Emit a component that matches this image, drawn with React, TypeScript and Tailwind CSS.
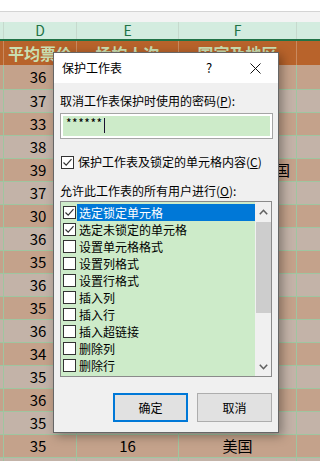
import React from "react";

const dVals = ["36","37","33","38","39","37","30","36","35","36","35","36","34","35","36","35","35",""];
const eVals = ["","","","","","","","","","","","","","","","","16",""];
const fVals = ["","","","","中华人民共和国","","","","","","","","","","","","美国",""];

const items = [
  { label: "选定锁定单元格", checked: true, selected: true },
  { label: "选定未锁定的单元格", checked: true },
  { label: "设置单元格格式" },
  { label: "设置列格式" },
  { label: "设置行格式" },
  { label: "插入列" },
  { label: "插入行" },
  { label: "插入超链接" },
  { label: "删除列" },
  { label: "删除行" },
];

function Check({ checked }: { checked?: boolean }) {
  return (
    <div className="w-[13px] h-[13px] shrink-0 border border-[#333333] bg-white flex items-center justify-center">
      {checked && (
        <svg width="11" height="11" viewBox="0 0 11 11">
          <path d="M1.5 5.5 L4.2 8.2 L9.5 2.2" fill="none" stroke="#333333" strokeWidth="1.2" />
        </svg>
      )}
    </div>
  );
}

export default function App() {
  const font = { fontFamily: '"Noto Sans CJK SC", "Noto Sans", sans-serif' };
  return (
    <div className="relative w-[320px] h-[461px] overflow-hidden bg-white" style={font}>
      {/* top area */}
      <div className="h-[11px] bg-white" />
      <div className="h-px bg-[#d4d4d4]" />
      <div className="h-[10px] bg-[#f3f3f3]" />
      {/* column letters */}
      <div className="flex h-[17px] bg-[#d3ecdf] text-[#217346] text-[14px] leading-[17px]">
        <div className="w-[4px] border-r border-[#c6d9cd]" />
        <div className="w-[73px] border-r border-[#c6d9cd] text-center">D</div>
        <div className="w-[102px] border-r border-[#c6d9cd] text-center">E</div>
        <div className="w-[118px] border-r border-[#c6d9cd] text-center">F</div>
        <div className="flex-1" />
      </div>
      <div className="h-[2px] bg-[#217346]" />
      {/* header row */}
      <div className="flex h-[24px] bg-[#b8632b] text-[#c9dfb1] text-[16px] font-bold leading-[24px]">
        <div className="w-[4px] border-r border-[#c98a5f]" />
        <div className="w-[73px] border-r border-[#c98a5f] text-center whitespace-nowrap overflow-hidden">平均票价</div>
        <div className="w-[102px] border-r border-[#c98a5f] text-center whitespace-nowrap">场均人次</div>
        <div className="w-[118px] border-r border-[#c98a5f] text-center whitespace-nowrap">国家及地区</div>
        <div className="flex-1" />
      </div>
      {/* data rows */}
      {dVals.map((d, i) => (
        <div
          key={i}
          className={`flex ${i === 0 ? "h-[25px]" : "h-[23px]"} border-b border-[#9fc5a0] ${i % 2 === 0 ? "bg-[#c4a28b]" : "bg-[#c3b3a8]"} text-[15px] text-black leading-[22px]`}
        >
          <div className="w-[4px] border-r border-[#9fc5a0]" />
          <div className="w-[73px] border-r border-[#9fc5a0] text-center pr-[4px] flex items-center justify-center">{d}</div>
          <div className="w-[102px] border-r border-[#9fc5a0] flex items-center justify-center">{eVals[i]}</div>
          <div className="w-[118px] border-r border-[#9fc5a0] flex items-center justify-center whitespace-nowrap">{fVals[i]}</div>
          <div className="flex-1" />
        </div>
      ))}

      {/* dialog */}
      <div className="absolute left-[53px] top-[52px] w-[226px] h-[381px] border border-[#666666] bg-[#f0f0f0] shadow-[3px_3px_10px_rgba(0,0,0,0.35)] flex flex-col text-[12px] leading-[16px] text-black">
        <div className="h-[30px] bg-white flex items-center pl-[8px] shrink-0">
          <span>保护工作表</span>
          <span className="absolute left-[152px] top-[7px] text-[13px]">?</span>
          <svg className="absolute left-[196px] top-[10px]" width="11" height="11" viewBox="0 0 11 11">
            <path d="M0.5 0.5 L10.5 10.5 M10.5 0.5 L0.5 10.5" stroke="#111" strokeWidth="1" fill="none" />
          </svg>
        </div>
        <div className="flex flex-col pl-[6px]">
          <div className="mt-[10px]">
            取消工作表保护时使用的密码(<span className="underline">P</span>):
          </div>
          <div className="mt-[4px] w-[213px] h-[26px] border border-[#a5a5a5] bg-white p-[2px]">
            <div className="h-full bg-[#cdebc9] flex items-start pl-[3px]">
              <span className="text-[12px] leading-[14px] tracking-[0.5px]">******</span>
              <span className="w-px h-[15px] bg-[#1a1030] mt-[2px] ml-[1px]" />
            </div>
          </div>
          <div className="mt-[15px] flex items-center pl-[1px] gap-[4px] h-[16px]">
            <Check checked />
            <span>
              保护工作表及锁定的单元格内容(<span className="underline">C</span>)
            </span>
          </div>
          <div className="mt-[13px]">
            允许此工作表的所有用户进行(<span className="underline">O</span>):
          </div>
          <div className="mt-[2px] w-[212px] h-[176px] border border-[#8a8a8a] bg-[#cdebc9] flex overflow-hidden">
            <div className="flex-1 flex flex-col pt-[2px] overflow-hidden">
              {items.map((it, i) => (
                <div key={i} className="h-[17px] flex items-center shrink-0 pl-[2px]">
                  <Check checked={it.checked} />
                  <div
                    className={`ml-[1px] flex-1 h-[17px] pl-[2px] flex items-center whitespace-nowrap ${it.selected ? "bg-[#0078d7] text-white" : ""}`}
                  >
                    {it.label}
                  </div>
                </div>
              ))}
            </div>
            <div className="w-[16px] bg-[#f0f0f0] flex flex-col items-center shrink-0">
              <div className="h-[20px] flex items-center justify-center">
                <svg width="9" height="6" viewBox="0 0 9 6">
                  <path d="M0.8 5.2 L4.5 1.3 L8.2 5.2" fill="none" stroke="#606060" strokeWidth="1.6" />
                </svg>
              </div>
              <div className="w-[15px] h-[91px] bg-[#cdcdcd]" />
              <div className="flex-1" />
              <div className="h-[18px] flex items-center justify-center">
                <svg width="9" height="6" viewBox="0 0 9 6">
                  <path d="M0.8 0.8 L4.5 4.7 L8.2 0.8" fill="none" stroke="#606060" strokeWidth="1.6" />
                </svg>
              </div>
            </div>
          </div>
          <div className="mt-[16px] flex gap-[9px] pl-[53px]">
            <div className="w-[75px] h-[29px] border-2 border-[#0078d7] bg-[#e1e1e1] flex items-center justify-center">确定</div>
            <div className="w-[75px] h-[29px] border border-[#adadad] bg-[#e1e1e1] flex items-center justify-center">取消</div>
          </div>
        </div>
      </div>
    </div>
  );
}
